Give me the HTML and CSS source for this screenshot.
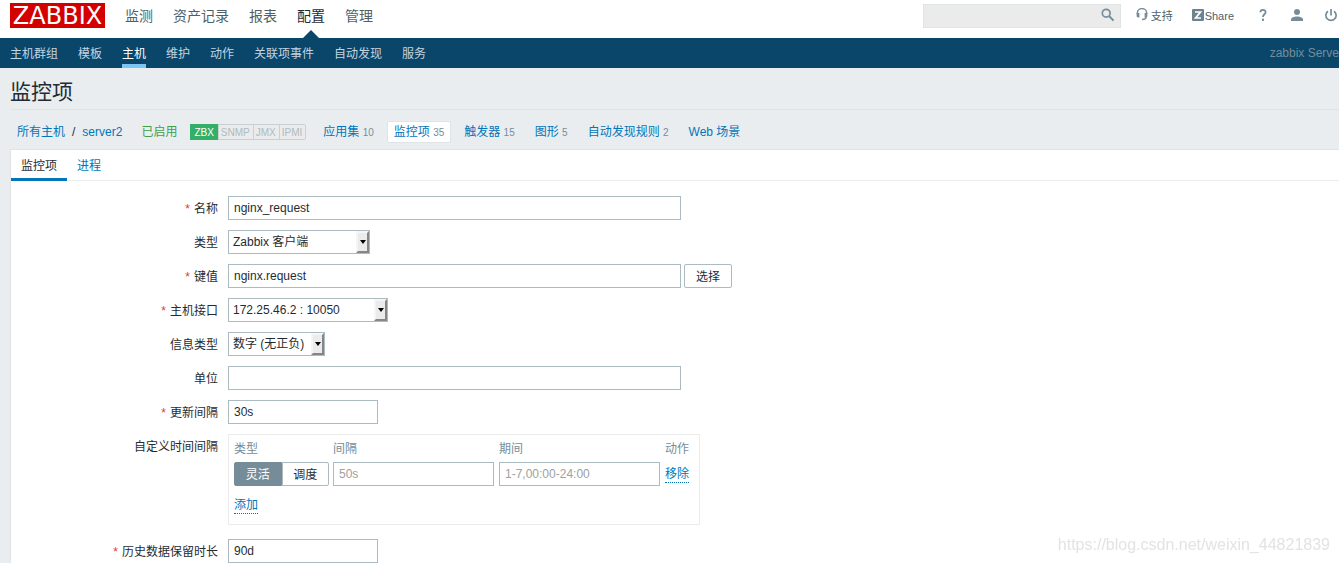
FILE: index.html
```html
<!DOCTYPE html>
<html lang="zh-CN">
<head>
<meta charset="utf-8">
<title>监控项</title>
<link rel="stylesheet" href="styles.css">
</head>
<body>
<header class="top">
  <a class="logo" href="#">ZABBIX</a>
  <nav class="main-nav">
    <a href="#">监测</a>
    <a href="#">资产记录</a>
    <a href="#">报表</a>
    <a href="#" class="current">配置</a>
    <a href="#">管理</a>
  </nav>
  <form class="search">
    <input type="text" aria-label="搜索">
    <button type="button" aria-label="搜索">
      <svg width="14" height="14" viewBox="0 0 14 14"><circle cx="5.2" cy="5.2" r="3.9" fill="none" stroke="#768d99" stroke-width="1.7"/><path d="M8 8l4.6 4.6" stroke="#768d99" stroke-width="2"/></svg>
    </button>
  </form>
  <nav class="tools">
    <a href="#" class="support"><svg width="12" height="13" viewBox="0 0 12 13"><path d="M1.4 6V4.800a4.600 4.200 0 0 1 9.200 0V6M10.200 8.500c0 2-1.200 3-4.200 3" fill="none" stroke="#768d99" stroke-width="1.500"/><path d="M.6 5h2.800v4.500H2A1.500 1.500 0 0 1 .6 8zM11.400 5H8.600v4.500H10A1.500 1.500 0 0 0 11.400 8z" fill="#768d99"/></svg><span>支持</span></a>
    <a href="#" class="share"><svg width="12" height="12" viewBox="0 0 12 12"><rect width="12" height="12" rx="1" fill="#6c838f"/><path d="M3 3h5.500L3.600 9H9" fill="none" stroke="#fff" stroke-width="1.700"/></svg><span>Share</span></a>
    <a href="#" class="tool-icon" aria-label="帮助"><svg width="12" height="14" viewBox="0 0 12 14"><path d="M3.400 4.300C3.400 1.200 8.600 1.200 8.600 4.200c0 2-2.600 2.200-2.600 4.700" fill="none" stroke="#768d99" stroke-width="1.800"/><rect x="5" y="10.700" width="2" height="2.200" fill="#768d99"/></svg></a>
    <a href="#" class="tool-icon" aria-label="用户"><svg width="12" height="14" viewBox="0 0 12 14"><circle cx="6" cy="4" r="3" fill="#768d99"/><path d="M0 13v-1.500C0 9.500 3 8.500 6 8.500s6 1 6 3V13z" fill="#768d99"/></svg></a>
    <a href="#" class="tool-icon" aria-label="退出"><svg width="12" height="14" viewBox="0 0 12 14"><path d="M6 1v6.500M3 3.200a5.100 5.100 0 1 0 6 0" fill="none" stroke="#768d99" stroke-width="1.700"/></svg></a>
  </nav>
</header>
<nav class="sub-nav">
  <a href="#">主机群组</a>
  <a href="#">模板</a>
  <a href="#" class="current">主机</a>
  <a href="#">维护</a>
  <a href="#">动作</a>
  <a href="#">关联项事件</a>
  <a href="#">自动发现</a>
  <a href="#">服务</a>
  <span class="server-name">zabbix Serve</span>
</nav>
<main class="page">
  <h1>监控项</h1>
  <div class="crumbs">
    <span class="path"><a href="#">所有主机</a><span>/</span><a href="#">server2</a></span>
    <span class="enabled">已启用</span>
    <span class="interfaces"><span class="on">ZBX</span><span>SNMP</span><span>JMX</span><span>IPMI</span></span>
    <a href="#" class="object">应用集 <sup>10</sup></a>
    <a href="#" class="object selected">监控项 <sup>35</sup></a>
    <a href="#" class="object">触发器 <sup>15</sup></a>
    <a href="#" class="object">图形 <sup>5</sup></a>
    <a href="#" class="object">自动发现规则 <sup>2</sup></a>
    <a href="#" class="object">Web 场景</a>
  </div>
  <section class="panel">
    <div class="tabs">
      <a href="#" class="current">监控项</a>
      <a href="#">进程</a>
    </div>
    <form class="item-form">
      <label class="required" for="name">名称</label>
      <div class="field"><input class="text wide" id="name" type="text" value="nginx_request"></div>

      <label for="type">类型</label>
      <div class="field"><span class="select type"><select id="type"><option>Zabbix 客户端</option></select></span></div>

      <label class="required" for="key">键值</label>
      <div class="field"><input class="text wide" id="key" type="text" value="nginx.request"><button class="button" type="button">选择</button></div>

      <label class="required" for="interface">主机接口</label>
      <div class="field"><span class="select interface"><select id="interface"><option>172.25.46.2 : 10050</option></select></span></div>

      <label for="value-type">信息类型</label>
      <div class="field"><span class="select value-type"><select id="value-type"><option>数字 (无正负)</option></select></span></div>

      <label for="units">单位</label>
      <div class="field"><input class="text wide" id="units" type="text"></div>

      <label class="required" for="delay">更新间隔</label>
      <div class="field"><input class="text short" id="delay" type="text" value="30s"></div>

      <span class="label">自定义时间间隔</span>
      <div class="intervals">
        <table>
          <thead><tr><th>类型</th><th>间隔</th><th>期间</th><th>动作</th></tr></thead>
          <tbody>
            <tr>
              <td><div class="switch">
                <input type="radio" name="flex" id="flexible" checked><label for="flexible">灵活</label>
                <input type="radio" name="flex" id="scheduling"><label for="scheduling">调度</label>
              </div></td>
              <td><input class="text cell" type="text" placeholder="50s" aria-label="间隔"></td>
              <td><input class="text cell" type="text" placeholder="1-7,00:00-24:00" aria-label="期间"></td>
              <td><button class="link" type="button">移除</button></td>
            </tr>
          </tbody>
        </table>
        <button class="link add" type="button">添加</button>
      </div>

      <label class="required" for="history">历史数据保留时长</label>
      <div class="field"><input class="text short" id="history" type="text" value="90d"></div>
    </form>
  </section>
</main>
<div class="watermark">https://blog.csdn.net/weixin_44821839</div>
</body>
</html>
```

FILE: styles.css
```css
*, *::before, *::after { box-sizing: border-box; }

body {
  margin: 0;
  min-height: 100vh;
  overflow: hidden;
  background: #e9edf0;
  color: #1f2c33;
  font: 12px/16px "Liberation Sans", "Noto Sans CJK SC", sans-serif;
}

a { color: #0275b8; text-decoration: none; white-space: nowrap; }
input, select, button { font: inherit; color: inherit; }
svg { display: block; flex: none; }

/* Header */
.top {
  display: flex;
  align-items: flex-start;
  height: 38px;
  padding: 3px 2px 0 10px;
  background: #fff;
}
.logo {
  width: 95px;
  height: 25px;
  background: #d40000;
  color: #fff;
  font: 24px/27px "DejaVu Sans", sans-serif;
  text-align: center;
}
.main-nav { display: flex; gap: 20px; margin-left: 20px; }
.main-nav a {
  position: relative;
  height: 35px;
  color: #4f5f68;
  font-size: 14px;
  line-height: 26px;
}
.main-nav .current { color: #1f2c33; }
.main-nav .current::after {
  content: "";
  position: absolute;
  left: 50%;
  bottom: 0;
  margin-left: -8px;
  border: 8px solid transparent;
  border-top: 0;
  border-bottom-color: #0a466a;
}
.search {
  display: flex;
  width: 198px;
  height: 24px;
  margin: 1px 0 0 auto;
  border: 1px solid #dfe4e7;
  background: #ebebeb;
}
.search input { flex: 1; min-width: 0; padding: 0 6px; border: 0; background: none; }
.search button { padding: 0 5px 2px; border: 0; background: none; }
.tools { display: flex; align-items: flex-start; margin: 5px 0 0 15px; }
.tools a { display: flex; color: #4f5f68; font-size: 11px; }
.support { gap: 3px; }
.share { gap: 1px; margin: 1px 1px 0 19px; }
.tools span { line-height: 16px; }
.share span { line-height: 14px; }
.tool-icon { margin-left: 22px; }

/* Second level navigation */
.sub-nav {
  display: flex;
  gap: 20px;
  height: 30px;
  padding-left: 10px;
  background: #0a466a;
  line-height: 30px;
}
.sub-nav a { height: 30px; color: #c3d5e0; line-height: 32px; }
.sub-nav .current { border-bottom: 4px solid #7bc5f3; color: #fff; }
.server-name { margin-left: auto; color: #768d99; white-space: nowrap; }

/* Page */
.page { padding-left: 10px; }
h1 {
  margin: 0;
  padding: 9px 0 2px;
  border-bottom: 1px solid #dfe4e7;
  font-size: 21px;
  font-weight: 400;
  line-height: 30px;
}
.crumbs { display: flex; align-items: center; height: 39px; padding: 5px 0 0 7px; }
.path { display: flex; gap: 7px; }
.enabled { margin-left: 19px; color: #429e47; }
.interfaces {
  display: flex;
  margin: 0 10px 0 13px;
  border: 1px solid #c8d0d4;
  border-radius: 2px;
  color: #acbbc2;
  font-size: 10px;
  line-height: 14px;
}
.interfaces span { padding: 1px 3px 0 2px; border-left: 1px solid #c8d0d4; background: #ebebeb; line-height: 13px; }
.interfaces .on { margin: -1px 0 -1px -1px; padding: 2px 4px 1px; border: 0; background: #34af67; color: #fff; }
.object { margin-right: 6px; padding: 2px 6px; border: 1px solid transparent; border-radius: 2px; }
.object sup { color: #768d99; font-size: 10px; line-height: 1; vertical-align: baseline; }
.selected { border-color: #dfe4e7; background: #fff; }

.panel {
  min-height: 414px;
  border: 1px solid #dfe4e7;
  border-width: 1px 0 0 1px;
  background: #fff;
}
.tabs { display: flex; height: 31px; border-bottom: 1px solid #ebeef0; line-height: 32px; }
.tabs a { height: 31px; padding: 0 10px; }
.tabs .current { border-bottom: 3px solid #0275b8; color: #1f2c33; }

/* Form */
.item-form {
  display: grid;
  grid-template-columns: 207px 1fr;
  gap: 10px;
  padding-top: 15px;
}
.item-form > label, .label { height: 24px; line-height: 26px; text-align: right; }
.required::before { content: "*"; margin-right: 4px; color: #e33734; }
.field { display: flex; gap: 3px; }
.text {
  height: 24px;
  padding: 0 5px;
  border: 1px solid #acbbc2;
  background: #fff;
}
.text::placeholder { color: #a0a0a0; opacity: 1; }
.wide { width: 453px; }
.short { width: 150px; }
.cell { display: block; width: 161px; }
.button {
  padding: 1px 11px 0;
  border: 1px solid #acbbc2;
  border-radius: 2px;
  background: #fff;
}
.select { position: relative; height: 24px; }
.select select {
  width: 100%;
  height: 24px;
  padding: 0 4px;
  border: 1px solid #acbbc2;
  border-radius: 0;
  background: #fff;
  appearance: none;
}
.select::before {
  content: "";
  position: absolute;
  top: 1px;
  right: 1px;
  width: 13px;
  height: 22px;
  border: 2px solid #f5f5f5;
  border-right-color: #868686;
  border-bottom-color: #868686;
  background: #ebebeb;
  pointer-events: none;
}
.select::after {
  content: "";
  position: absolute;
  top: 10px;
  right: 4px;
  border: 3px solid transparent;
  border-top: 4px solid #000;
  border-bottom: 0;
  pointer-events: none;
}
.type { width: 142px; }
.interface { width: 160px; }
.value-type { width: 97px; }

.intervals {
  justify-self: start;
  width: 472px;
  margin-bottom: 4px;
  padding: 6px 5px 10px;
  border: 1px solid #ebebeb;
}
.intervals table { border-collapse: collapse; }
.intervals th { padding: 0 0 5px; color: #768d99; font-weight: 400; text-align: left; }
.intervals td { padding: 0 5px 0 0; }
.intervals td:first-child { padding-right: 4px; }
.switch { display: flex; width: 95px; }
.switch input { position: absolute; opacity: 0; }
.switch label {
  flex: 1;
  height: 24px;
  border: 1px solid #acbbc2;
  border-radius: 0 2px 2px 0;
  line-height: 24px;
  text-align: center;
}
.switch input:checked + label {
  border-color: #768d99;
  border-radius: 2px 0 0 2px;
  background: #768d99;
  color: #fff;
}
.link {
  display: block;
  padding: 0;
  border: 0;
  border-bottom: 1px dotted #0275b8;
  background: none;
  color: #0275b8;
  line-height: 16px;
}
.add { margin-top: 11px; }

.watermark {
  position: fixed;
  right: 9px;
  bottom: 8px;
  color: #e3e3e3;
  font-size: 16px;
  line-height: 20px;
}
```
